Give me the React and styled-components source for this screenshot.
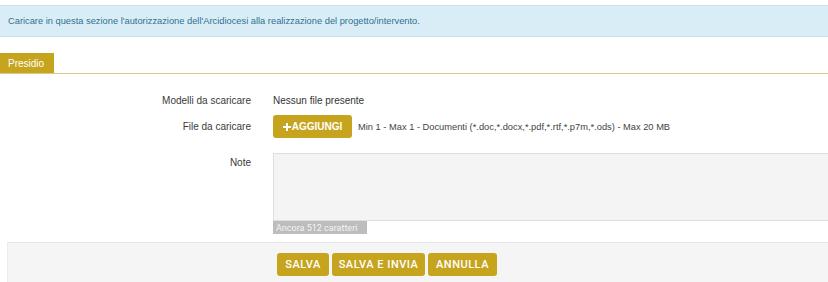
import styled, { createGlobalStyle } from 'styled-components';

const gold = '#c6a41e';

const GlobalStyle = createGlobalStyle`
  html, body {
    margin: 0;
    padding: 0;
    background: #fff;
    font-family: "Liberation Sans", Arial, sans-serif;
    color: #333;
  }
`;

// Wrapper
const Page = styled.div`
  width: 828px;
  height: 282px;
  overflow: hidden;
  padding-top: 5px;
  box-sizing: border-box;
`;

// Info alert
const Alert = styled.div`
  height: 32px;
  box-sizing: border-box;
  background: #d9edf7;
  border-top: 1px solid #cfe0ec;
  border-bottom: 1px solid #c6e3ee;
  color: #31708f;
  font-size: 9.3px;
  display: flex;
  align-items: center;
  padding-left: 8px;
`;

// Tabs
const TabBar = styled.div`
  margin-top: 16px;
  display: flex;
  border-bottom: 1px solid #d7c88e;
`;

const Tab = styled.div`
  width: 54px;
  height: 20px;
  background: ${gold};
  color: #fff;
  font-size: 10px;
  display: flex;
  align-items: center;
  padding-left: 8px;
  box-sizing: border-box;
`;

// Form
const Form = styled.div`
  display: grid;
  grid-template-columns: 251px 1fr;
  column-gap: 22px;
  margin-top: 19px;
`;

const Label = styled.div`
  text-align: right;
  font-size: 10px;
  color: #3a3a3a;
  display: flex;
  align-items: ${({ $top }) => ($top ? 'flex-start' : 'center')};
  justify-content: flex-end;
  padding-top: ${({ $top }) => ($top ? '4px' : '0')};
  height: ${({ $h }) => $h || 'auto'};
`;

const Value = styled.div`
  font-size: 10px;
  color: #333;
  display: flex;
  align-items: center;
  gap: 6px;
  min-width: 0;
`;

const RowGap = styled.div`
  grid-column: 1 / -1;
  height: ${({ $h }) => $h}px;
`;

const AddButton = styled.button`
  height: 23px;
  width: 79px;
  background: ${gold};
  border: none;
  border-radius: 3px;
  color: #fff;
  font-family: "Liberation Sans", Arial, sans-serif;
  font-weight: bold;
  font-size: 10px;
  display: flex;
  align-items: center;
  justify-content: center;
  gap: 1px;
  padding: 0;
  cursor: pointer;
`;

const Hint = styled.span`
  font-size: 9.3px;
  color: #444;
  white-space: nowrap;
`;

const NoteBox = styled.div`
  display: flex;
  flex-direction: column;
  align-items: flex-start;
  margin-right: -20px;
`;

const TextArea = styled.textarea`
  width: 100%;
  height: 68px;
  box-sizing: border-box;
  background: #f4f4f4;
  border: 1px solid #dedede;
  border-right: none;
  resize: none;
  margin: 0;
  display: block;
`;

const Counter = styled.span`
  background: #bdbdbd;
  color: #f4f4f4;
  font-family: Roboto, "Liberation Sans", sans-serif;
  font-size: 9px;
  height: 13px;
  width: 94px;
  display: flex;
  align-items: center;
  padding-left: 3px;
  box-sizing: border-box;
`;

// Footer
const Footer = styled.div`
  margin: 8px 0 0 7px;
  height: 45px;
  background: #f5f5f5;
  border-top: 1px solid #e6e6e6;
  border-left: 1px solid #ececec;
  display: flex;
  gap: 3px;
  padding: 10px 0 0 269px;
  box-sizing: border-box;
`;

const ActionButton = styled.button`
  height: 23px;
  width: ${({ $w }) => $w}px;
  background: ${gold};
  border: none;
  border-radius: 3px;
  color: #fff;
  font-family: Roboto, "Liberation Sans", sans-serif;
  font-weight: 500;
  font-size: 11px;
  letter-spacing: 0.5px;
  padding: 0;
  cursor: pointer;
`;

const Plus = () => (
  <svg width="8" height="8" viewBox="0 0 8 8">
    <path d="M3 0h2v3h3v2H5v3H3V5H0V3h3z" fill="#fff" />
  </svg>
);

const App = () => (
  <Page>
    <GlobalStyle />
    <Alert>
      Caricare in questa sezione l'autorizzazione dell'Arcidiocesi alla realizzazione del progetto/intervento.
    </Alert>

    <TabBar>
      <Tab>Presidio</Tab>
    </TabBar>

    <Form>
      <Label $h="14px">Modelli da scaricare</Label>
      <Value>Nessun file presente</Value>

      <RowGap $h={8} />

      <Label>File da caricare</Label>
      <Value>
        <AddButton><Plus />AGGIUNGI</AddButton>
        <Hint>Min 1 - Max 1 - Documenti (*.doc,*.docx,*.pdf,*.rtf,*.p7m,*.ods) - Max 20 MB</Hint>
      </Value>

      <RowGap $h={15} />

      <Label $top>Note</Label>
      <NoteBox>
        <TextArea />
        <Counter>Ancora 512 caratteri</Counter>
      </NoteBox>
    </Form>

    <Footer>
      <ActionButton $w={52}>SALVA</ActionButton>
      <ActionButton $w={93}>SALVA E INVIA</ActionButton>
      <ActionButton $w={69}>ANNULLA</ActionButton>
    </Footer>
  </Page>
);

export default App;
